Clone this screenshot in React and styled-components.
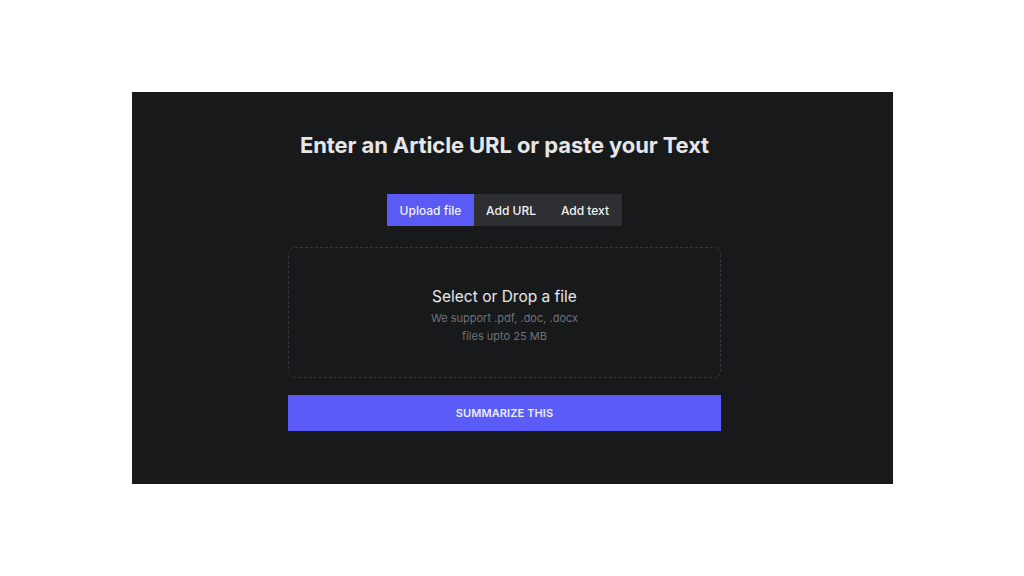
import React, { useState } from "react";
import styled, { createGlobalStyle } from "styled-components";

const GlobalStyle = createGlobalStyle`
  html, body {
    margin: 0;
    padding: 0;
    background: #ffffff;
    font-family: Inter, "Noto Sans", sans-serif;
  }
`;

const Page = styled.div`
  width: 100vw;
  height: 100vh;
  display: flex;
  align-items: center;
  justify-content: center;
`;

const Panel = styled.div`
  width: 761px;
  height: 392px;
  box-sizing: border-box;
  background: #18191b;
  padding: 39px 15px 0 0;
  display: flex;
  flex-direction: column;
  align-items: center;
`;

const Title = styled.h1`
  margin: 0;
  font-size: 22px;
  line-height: 28px;
  font-weight: 700;
  color: #e6e6e8;
  letter-spacing: -0.1px;
`;

const Tabs = styled.div`
  margin-top: 35px;
  display: flex;
  background: #2e2f33;
  height: 32px;
`;

const Tab = styled.button`
  border: 0;
  outline: none;
  cursor: pointer;
  height: 32px;
  width: ${(props) => props.w}px;
  padding: 0;
  font-family: Inter, "Noto Sans", sans-serif;
  font-size: 12px;
  font-weight: 500;
  color: #f2f2f4;
  background: ${(props) => (props.active ? "#5a5af6" : "transparent")};
`;

const DropZone = styled.div`
  margin-top: 21px;
  width: 433px;
  height: 131px;
  box-sizing: border-box;
  border: 1px dashed #34363b;
  border-radius: 7px;
  display: flex;
  flex-direction: column;
  align-items: center;
  justify-content: center;
  padding-top: 6px;
`;

const DropTitle = styled.div`
  font-size: 15.5px;
  line-height: 22px;
  color: #e8e8ea;
  margin-bottom: 1px;
`;

const DropHint = styled.div`
  font-size: 11px;
  line-height: 18px;
  color: #6f727a;
  text-align: center;
`;

const Submit = styled.button`
  margin-top: 17px;
  width: 433px;
  height: 36px;
  border: 0;
  cursor: pointer;
  background: #5b5bf7;
  color: #ececff;
  font-family: Inter, "Noto Sans", sans-serif;
  font-size: 11px;
  font-weight: 600;
  letter-spacing: 0.1px;
`;

const tabs = [
  { key: "file", label: "Upload file", w: 87 },
  { key: "url", label: "Add URL", w: 74 },
  { key: "text", label: "Add text", w: 74 },
];

const App = () => {
  const [active, setActive] = useState("file");
  return (
    <>
      <GlobalStyle />
      <Page>
        <Panel>
          <Title>Enter an Article URL or paste your Text</Title>
          <Tabs>
            {tabs.map((t) => (
              <Tab
                key={t.key}
                w={t.w}
                active={active === t.key}
                onClick={() => setActive(t.key)}
              >
                {t.label}
              </Tab>
            ))}
          </Tabs>
          <DropZone>
            <DropTitle>Select or Drop a file</DropTitle>
            <DropHint>
              We support .pdf, .doc, .docx
              <br />
              files upto 25 MB
            </DropHint>
          </DropZone>
          <Submit>SUMMARIZE THIS</Submit>
        </Panel>
      </Page>
    </>
  );
};

export default App;
